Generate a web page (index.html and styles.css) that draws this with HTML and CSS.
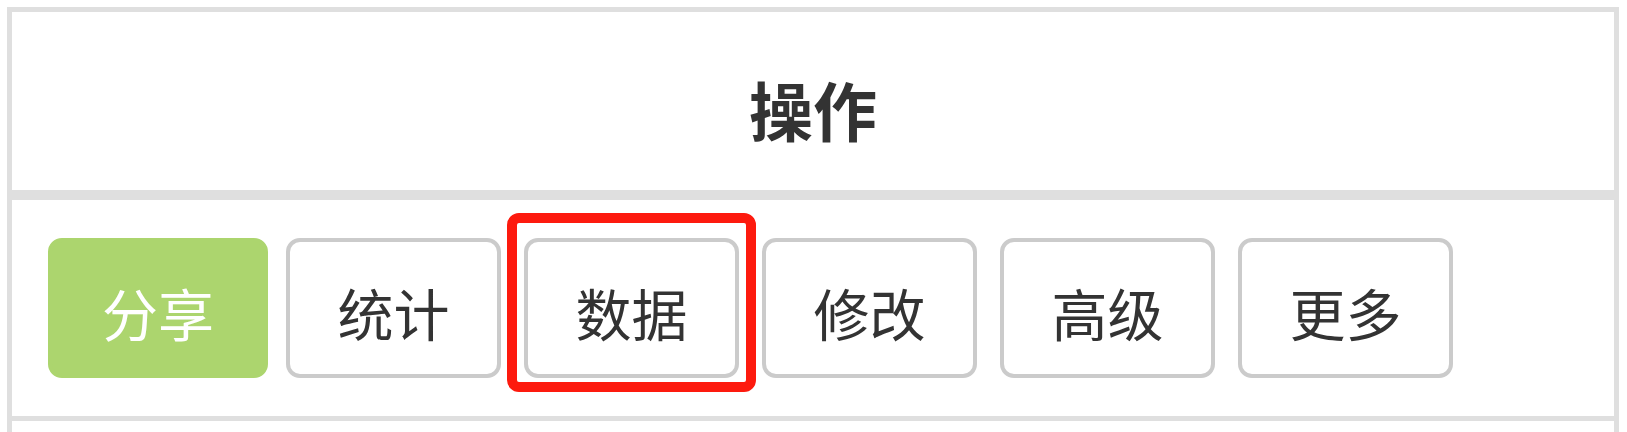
FILE: index.html
```html
<!DOCTYPE html>
<html lang="zh-CN">
<head>
<meta charset="utf-8">
<title>操作</title>
<link rel="stylesheet" href="styles.css">
</head>
<body>
<div class="table">
  <div class="thead">操作</div>
  <div class="row">
    <button class="btn btn-primary">分享</button>
    <button class="btn">统计</button>
    <span class="hl"><button class="btn">数据</button></span>
    <button class="btn">修改</button>
    <button class="btn">高级</button>
    <button class="btn">更多</button>
  </div>
  <div class="row row-next"></div>
</div>
</body>
</html>
```
FILE: styles.css
```css
html, body {
  margin: 0;
  padding: 0;
  overflow: hidden;
  background: #fff;
}
body {
  font-family: "Noto Sans CJK SC", sans-serif;
  color: #333;
}
.table {
  margin: 7px 0 0 7px;
  width: 1612px;
  box-sizing: border-box;
  border: 5px solid #dfdfdf;
  border-bottom: none;
}
.thead {
  height: 188px;
  border-bottom: 10px solid #dfdfdf;
  display: flex;
  align-items: center;
  justify-content: center;
  font-family: "Noto Sans CJK SC", sans-serif;
  font-size: 64px;
  font-weight: bold;
  line-height: 1;
  padding-top: 14px;
  box-sizing: border-box;
}
.row {
  height: 221px;
  box-sizing: border-box;
  border-bottom: 5px solid #dfdfdf;
  padding: 38px 36px 0;
  display: flex;
  align-items: flex-start;
}
.row-next {
  height: 100px;
  border-bottom: none;
}
.btn {
  width: 215px;
  height: 140px;
  box-sizing: border-box;
  border: 4px solid #cbcbcb;
  border-radius: 14px;
  background: #fff;
  color: #333;
  font-family: "Noto Sans CJK SC", sans-serif;
  font-size: 56px;
  line-height: 1;
  padding: 8px 0 0 0;
  margin: 0 23px 0 0;
  display: flex;
  align-items: center;
  justify-content: center;
}
.btn-primary {
  width: 220px;
  background: #acd56e;
  border-color: #acd56e;
  color: #fff;
  margin-right: 18px;
}
.hl {
  position: relative;
  display: block;
  margin-right: 23px;
}
.hl .btn {
  margin-right: 0;
}
.hl::after {
  content: "";
  position: absolute;
  top: -25px;
  bottom: -14px;
  left: -17px;
  right: -17px;
  border: 10px solid #fd1a0e;
  border-radius: 12px;
  pointer-events: none;
}
```
